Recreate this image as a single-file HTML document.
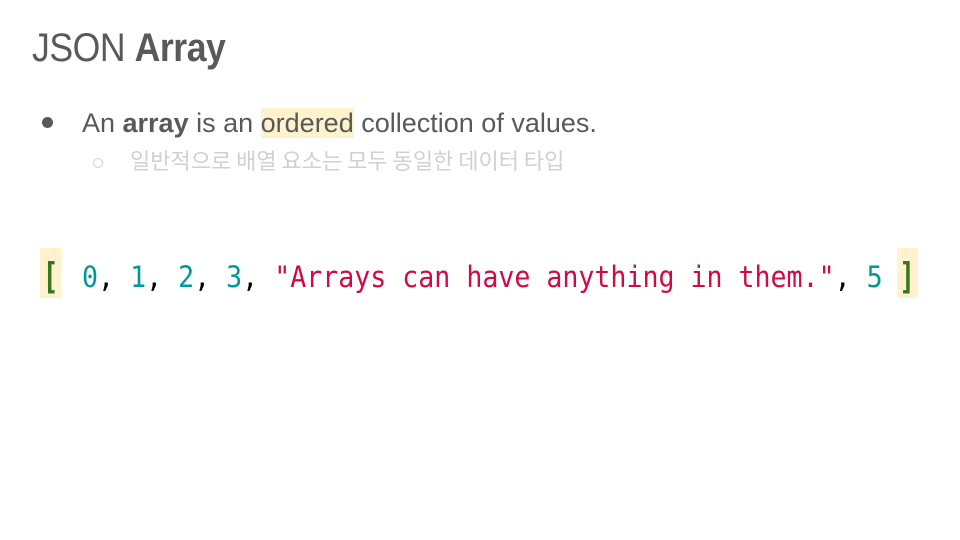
<!DOCTYPE html>
<html><head><meta charset="utf-8"><style>
body{margin:0;width:960px;height:540px;background:#fff;position:relative;overflow:hidden;font-family:"Liberation Sans","Noto Sans CJK KR",sans-serif}
.t{position:absolute;left:32px;top:26px;font-size:40px;color:#595959;letter-spacing:-0.5px;transform:scaleX(0.89);transform-origin:left top}
.b{position:absolute;left:82px;top:106px;font-size:27px;color:#595959;line-height:34px}
.dot{position:absolute;left:42px;top:117px;width:11px;height:11px;border-radius:50%;background:#595959}
.hl{background:#fff2cc}
.k{position:absolute;left:130px;top:145px;font-size:22px;color:#d0d0d0;font-family:"Noto Sans CJK KR",sans-serif;line-height:30px}
.c{position:absolute;left:93px;top:158px;width:8px;height:8px;border:1px solid #d0d0d0;border-radius:50%}
.code{position:absolute;left:40px;top:248px;font-family:"DejaVu Sans Mono","Liberation Mono",monospace;font-size:26.6px;line-height:45px;color:#000;white-space:pre;transform:scaleY(1.11);transform-origin:left top}
.code .in{position:relative;top:4px}
.br{background:#fff2cc;color:#38761d;font-weight:bold;display:inline-block;width:21px;text-align:center;margin-right:5px}
.br i{font-style:normal;display:inline-block;transform:scaleY(1.25) translateY(3px)}
.br2{margin-right:0;margin-left:-2px}
.n{color:#009999}.s{color:#d10a45}
</style></head><body>
<div class="t">JSON <b>Array</b></div>
<div class="dot"></div>
<div class="b">An <b>array</b> is an <span class="hl">ordered</span> collection of values.</div>
<div class="c"></div>
<div class="k">일반적으로 배열 요소는 모두 동일한 데이터 타입</div>
<div class="code"><span class="br"><i>[</i></span><span class="in"> <span class="n">0</span>, <span class="n">1</span>, <span class="n">2</span>, <span class="n">3</span>, <span class="s">"Arrays can have anything in them."</span>, <span class="n">5</span> </span><span class="br br2"><i>]</i></span></div>
</body></html>
